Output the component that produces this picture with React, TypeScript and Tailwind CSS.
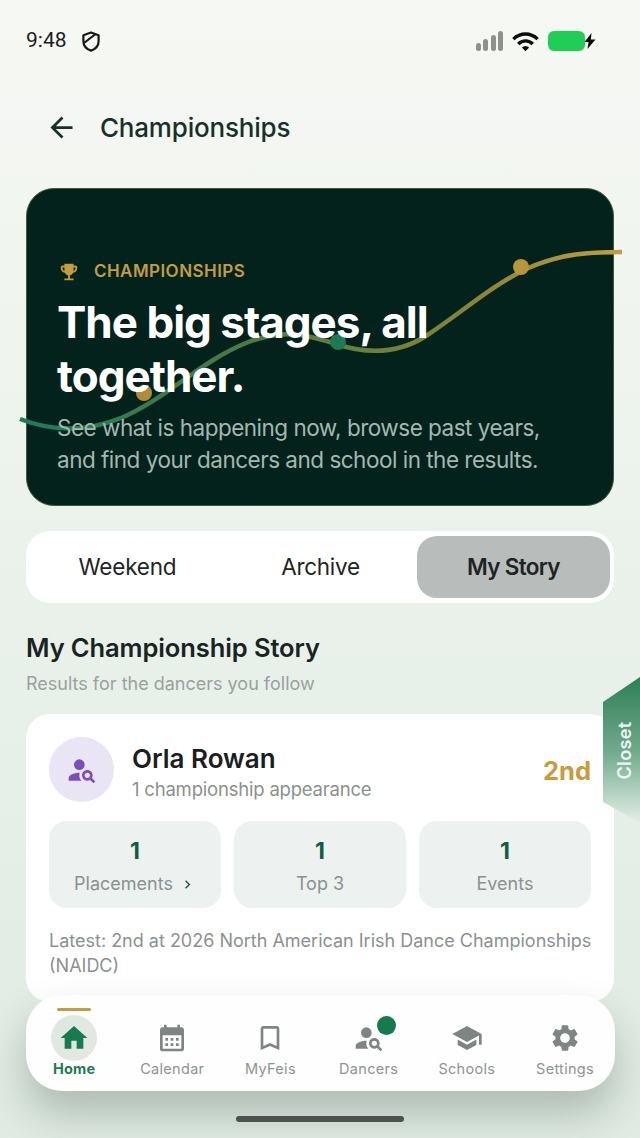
import React from 'react';
import {
  MdArrowBack,
  MdBookmarkBorder,
  MdCalendarMonth,
  MdChevronRight,
  MdEmojiEvents,
  MdHome,
  MdPersonSearch,
  MdSchool,
  MdSettings,
  MdWifi,
} from 'react-icons/md';

const navItems = [
  { label: 'Calendar', icon: MdCalendarMonth },
  { label: 'MyFeis', icon: MdBookmarkBorder },
  { label: 'Dancers', icon: MdPersonSearch, dot: true },
  { label: 'Schools', icon: MdSchool },
  { label: 'Settings', icon: MdSettings },
];

function StatusBar() {
  return (
    <div className="flex h-[82px] items-center justify-between pl-[26px] pr-[44px] text-[#1a1f1d]">
      <div className="flex items-center gap-[15px]">
        <span className="font-['Roboto',sans-serif] text-[21px]">9:48</span>
        <svg width="18" height="21" viewBox="0 0 18 21" fill="none" stroke="#151917" strokeWidth="2.2" strokeLinejoin="round">
          <path d="M9 1.5 16.6 4.2v6c0 4.6-3 7.8-7.6 9.4C4.4 18 1.4 14.8 1.4 10.2v-6z" />
          <path d="M2 12 13 3.5" />
        </svg>
      </div>
      <div className="flex items-center gap-[8px]">
        <div className="flex items-end gap-[2.5px]">
          <span className="h-[8px] w-[5px] rounded-full bg-[#8e928f]" />
          <span className="h-[12px] w-[5px] rounded-full bg-[#8e928f]" />
          <span className="h-[16px] w-[5px] rounded-full bg-[#8e928f]" />
          <span className="h-[20px] w-[5px] rounded-full bg-[#8e928f]" />
        </div>
        <MdWifi className="text-[29px] text-[#0b0d0c]" />
        <div className="flex items-center">
          <span className="h-[20px] w-[37px] rounded-[6px] bg-[#1fcf55]" />
          <svg width="12" height="16" viewBox="0 0 12 16" fill="#0b0d0c" className="-ml-[1px]">
            <path d="M7.5 0 0.5 9h4L3.5 16 11.5 6.5h-4.6z" />
          </svg>
        </div>
      </div>
    </div>
  );
}

function Hero() {
  return (
    <div className="relative h-[318px] rounded-[28px] border border-[#3f5a35] bg-[#03221c] pl-[30px] pt-[70px]">
      {/* Curve runs past the card on both sides */}
      <svg className="absolute left-[-8px] top-[50px] h-[200px] w-[606px] overflow-visible" viewBox="18 238 606 200" fill="none">
        <defs>
          <linearGradient id="curve" x1="19" y1="0" x2="620" y2="0" gradientUnits="userSpaceOnUse">
            <stop offset="0" stopColor="#1f7a58" />
            <stop offset="0.4" stopColor="#4f7a42" />
            <stop offset="0.75" stopColor="#85843a" />
            <stop offset="1" stopColor="#c39d3f" />
          </linearGradient>
        </defs>
        <path
          d="M19 418C50 430 85 431 120 417C165 398 200 360 245 342C285 326 310 335 335 343C365 353 395 354 425 335C460 312 490 285 525 268C560 252 590 251 621 251"
          stroke="url(#curve)"
          strokeWidth="4.5"
        />
        <circle cx="143" cy="392" r="8" fill="#b08c3a" />
        <circle cx="337" cy="341" r="8" fill="#1c7a55" />
        <circle cx="520" cy="266" r="8" fill="#b8943a" />
      </svg>
      <div className="relative">
        <div className="flex items-center gap-[14px] pl-[1px]">
          <MdEmojiEvents className="text-[22px] text-[#c39d3f]" />
          <span className="text-[17px] font-semibold tracking-[0.45px] text-[#c39d3f]">CHAMPIONSHIPS</span>
        </div>
        <h2 className="mt-[10px] text-[44px] leading-[54px] font-bold tracking-[-1px] text-white">
          The big stages, all
          <br />
          together.
        </h2>
        <p className="mt-[9px] text-[22.5px] leading-[32px] tracking-[-0.5px] text-[#a3b8b0]">
          See what is happening now, browse past years,
          <br />
          and find your dancers and school in the results.
        </p>
      </div>
    </div>
  );
}

function Tabs() {
  return (
    <div className="mt-[25px] flex h-[72px] rounded-[24px] bg-white py-[5px] pl-[5px] pr-[4px]">
      <div className="flex flex-1 items-center justify-center text-[22.5px] tracking-[-0.2px] text-[#1c2523]">Weekend</div>
      <div className="flex flex-1 items-center justify-center text-[22.5px] tracking-[-0.3px] text-[#1c2523]">Archive</div>
      <div className="flex flex-1 items-center justify-center rounded-[20px] bg-[#b8bcba] text-[22.5px] font-semibold tracking-[-0.7px] text-[#1c2523]">
        My Story
      </div>
    </div>
  );
}

function Stat({ value, label, chevron }: { value: string; label: string; chevron?: boolean }) {
  return (
    <div className="flex h-[87px] flex-col items-center rounded-[18px] bg-[#edf2f0] pt-[15px]">
      <span className="text-[23px] leading-[30px] font-bold text-[#135c42]">{value}</span>
      <span className="mt-[5px] flex items-center gap-[6px] text-[18px] leading-[26px] text-[#8b918f]">
        {label}
        {chevron && <MdChevronRight className="text-[17px] text-[#135c42]" />}
      </span>
    </div>
  );
}

function DancerCard() {
  return (
    <div className="mt-[18px] h-[288px] rounded-[24px] bg-white px-[23px] pt-[23px]">
      <div className="flex items-center">
        <div className="flex h-[65px] w-[65px] items-center justify-center rounded-full bg-[#eae5f5]">
          <MdPersonSearch className="text-[32px] text-[#7a50b8]" />
        </div>
        <div className="ml-[18px] flex-1 pt-[6px]">
          <div className="text-[26px] leading-[32px] font-semibold text-[#18201e]">Orla Rowan</div>
          <div className="mt-[2px] text-[18.5px] leading-[25px] tracking-[-0.2px] text-[#8b918f]">1 championship appearance</div>
        </div>
        <span className="mt-[3px] text-[25.5px] font-bold text-[#c89b3c]">2nd</span>
      </div>
      <div className="mt-[19px] grid grid-cols-3 gap-[13px]">
        <Stat value="1" label="Placements" chevron />
        <Stat value="1" label="Top 3" />
        <Stat value="1" label="Events" />
      </div>
      <p className="mt-[20px] text-[18px] leading-[25px] whitespace-nowrap text-[#8b918f]">
        Latest: 2nd at 2026 North American Irish Dance Championships
        <br />
        (NAIDC)
      </p>
    </div>
  );
}

function BottomNav() {
  return (
    <div className="absolute left-[26px] top-[995px] flex h-[96px] w-[589px] rounded-[36px] bg-[#fdfefd] shadow-[0_22px_40px_rgba(40,60,50,0.28)]">
      <div className="relative -ml-[1px] flex w-[98.2px] flex-col items-center pt-[20px]">
        <span className="absolute top-[13px] h-[3px] w-[34px] rounded-full bg-[#c89b3c]" />
        <div className="flex h-[46px] w-[46px] items-center justify-center rounded-full bg-gradient-to-br from-[#dbe9e2] to-[#e8e6e0]">
          <MdHome className="text-[32px] text-[#177a50]" />
        </div>
        <span className="-mt-[2px] text-[14.5px] leading-[20px] font-bold tracking-[0.2px] text-[#1f7a55]">Home</span>
      </div>
      {navItems.map(({ label, icon: Icon, dot }) => (
        <div key={label} className="relative flex w-[98.2px] flex-col items-center pt-[27px]">
          <Icon className="h-[32px] w-[32px] text-[#7f8583]" />
          {dot && <span className="absolute left-[57px] top-[21px] h-[19px] w-[19px] rounded-full bg-[#157a50]" />}
          <span className="mt-[5px] text-[14.5px] leading-[20px] tracking-[0.3px] text-[#8f9493]">{label}</span>
        </div>
      ))}
    </div>
  );
}

export default function App() {
  return (
    <div className="relative h-[1138px] w-[640px] overflow-hidden bg-gradient-to-b from-[#f6f8f4] to-[#dfebe3] font-['Inter',sans-serif]">
      <StatusBar />
      <div className="flex h-[91px] items-center pl-[45px]">
        <MdArrowBack className="text-[33px] text-[#17302a]" />
        <h1 className="ml-[22px] text-[26px] font-medium tracking-[-0.2px] text-[#17302a]">Championships</h1>
      </div>
      <main className="px-[26px] pt-[15px]">
        <Hero />
        <Tabs />
        <h3 className="mt-[28px] text-[25.5px] leading-[34px] font-semibold tracking-[-0.1px] text-[#18241f]">My Championship Story</h3>
        <p className="mt-[7px] text-[18px] leading-[24px] text-[#9ba1a0]">Results for the dancers you follow</p>
        <DancerCard />
      </main>

      {/* Side tab */}
      <div className="absolute left-[603px] top-[677px] flex h-[146px] w-[37px] items-center justify-center bg-gradient-to-b from-[#2a7f58] via-[#6ea98b] to-[#e4efe9] [clip-path:polygon(0_25px,100%_0,100%_100%,0_125px)]">
        <span className="translate-x-[3px] -rotate-90 text-[18px] font-semibold tracking-[0.4px] whitespace-nowrap text-[#eef6f1]">Closet</span>
      </div>

      <BottomNav />
      <div className="absolute left-[236px] top-[1116px] h-[6px] w-[168px] rounded-full bg-[#4b524f]" />
    </div>
  );
}
